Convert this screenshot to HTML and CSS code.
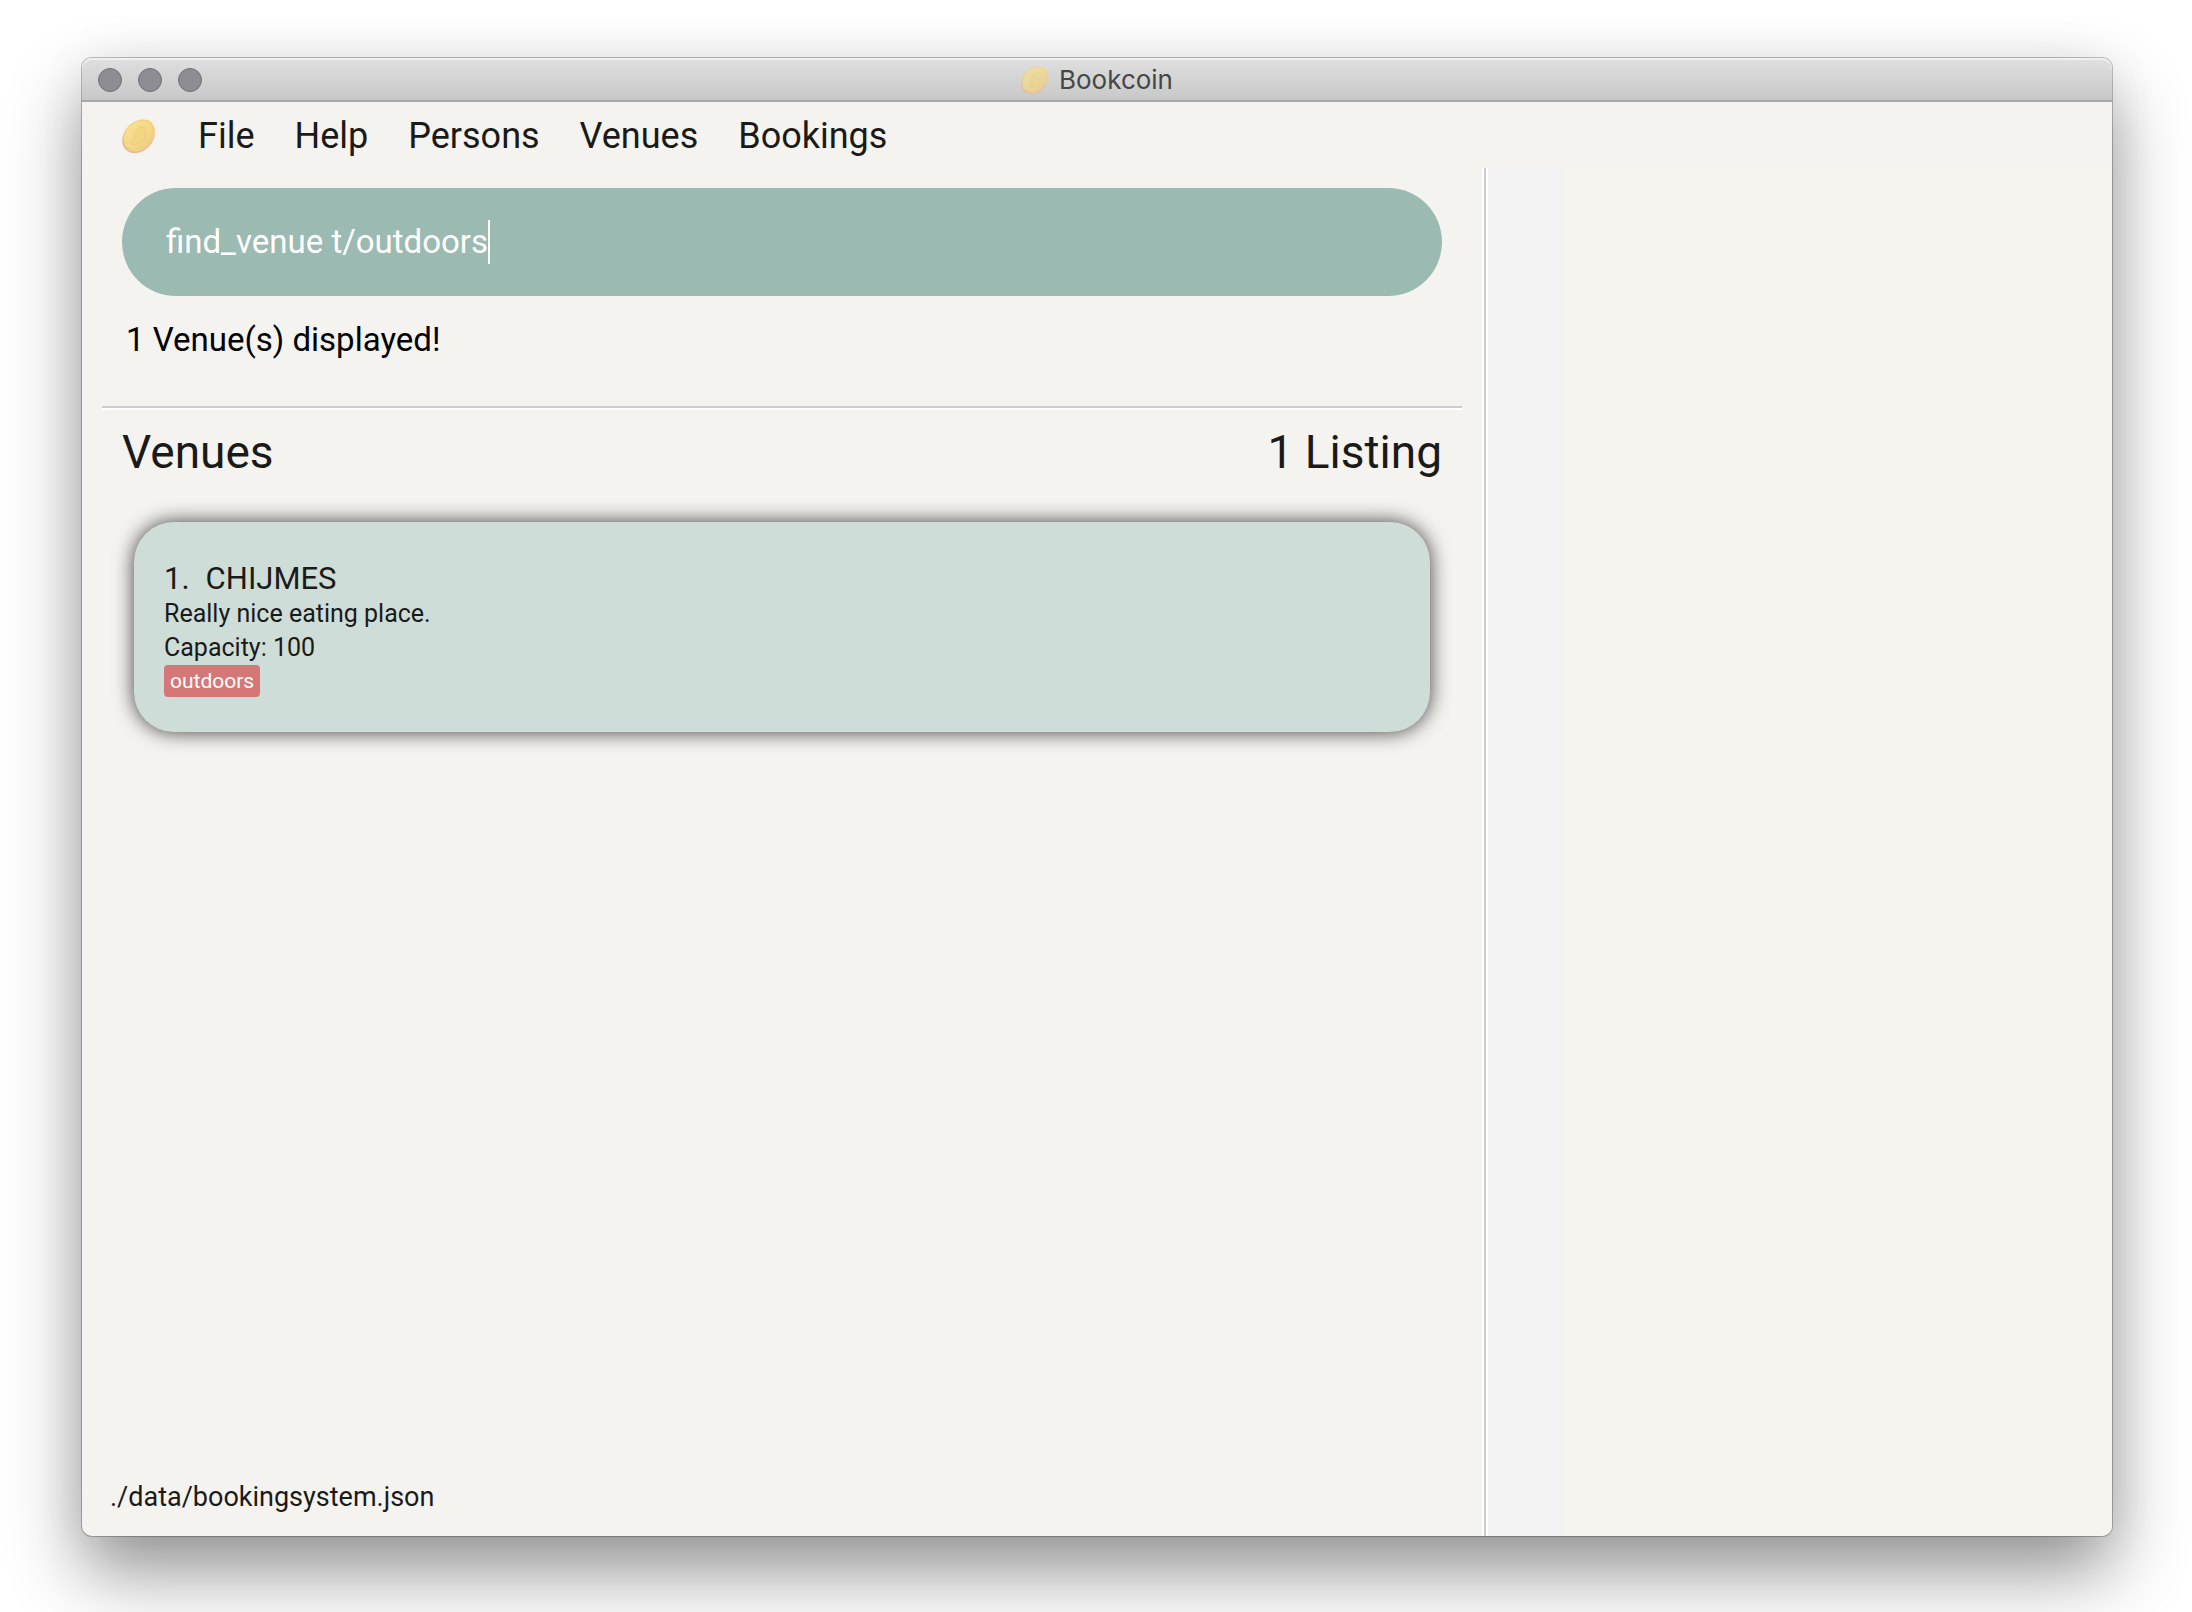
FILE: index.html
```html
<!DOCTYPE html>
<html lang="en">
<head>
<meta charset="utf-8">
<title>Bookcoin</title>
<link rel="stylesheet" href="styles.css">
</head>
<body>
<svg class="defs" width="0" height="0" aria-hidden="true">
  <defs>
    <linearGradient id="gold" x1="0" y1="0" x2="1" y2="1">
      <stop offset="0" stop-color="#f6e492"/>
      <stop offset="0.55" stop-color="#f4d886"/>
      <stop offset="1" stop-color="#f0c68a"/>
    </linearGradient>
  </defs>
  <symbol id="coin" viewBox="0 0 34 34">
    <ellipse cx="16.6" cy="17.6" rx="18.4" ry="14.4" transform="rotate(-46 16.6 17.6)" fill="#ebb894"/>
    <path d="M3 12C7 4 17-1 26 1c7 3 9 11 5 19-5 9-13 14-21 12C2 30-1 21 3 12z" fill="url(#gold)"/>
    <ellipse cx="16.4" cy="15.6" rx="16.4" ry="12.2" transform="rotate(-46 16.4 15.6)" fill="none" stroke="#eecd7e" stroke-width="0.8"/>
    <path d="M20 8c-3 0-5 2-6 4s0 3-1 4-2 1-1 3-3 3-3 5 3 2 5 1 6-1 8-4-1-3 1-6 1-7-3-7z" fill="#f3d680" stroke="#ebc97b" stroke-width="0.8"/>
  </symbol>
</svg>
<div class="window">
  <header class="titlebar">
    <div class="controls">
      <button type="button" aria-label="Close"></button>
      <button type="button" aria-label="Minimize"></button>
      <button type="button" aria-label="Zoom"></button>
    </div>
    <div class="title"><svg class="title-icon"><use href="#coin"/></svg><span>Bookcoin</span></div>
  </header>
  <nav class="menubar">
    <svg class="menu-icon"><use href="#coin"/></svg>
    <button type="button">File</button>
    <button type="button">Help</button>
    <button type="button">Persons</button>
    <button type="button">Venues</button>
    <button type="button">Bookings</button>
  </nav>
  <div class="panes">
    <main class="main">
      <label class="command">
        <input type="text" aria-label="Command" value="find_venue t/outdoors">
        <span class="caret"></span>
      </label>
      <output class="result">1 Venue(s) displayed!</output>
      <section class="listing">
        <div class="heading"><h1>Venues</h1><span>1 Listing</span></div>
        <ol class="cards">
          <li class="card">
            <h2><span>1.</span><span>CHIJMES</span></h2>
            <p>Really nice eating place.</p>
            <p>Capacity: 100</p>
            <span class="tag">outdoors</span>
          </li>
        </ol>
      </section>
      <footer class="status">./data/bookingsystem.json</footer>
    </main>
    <aside class="side"></aside>
  </div>
</div>
</body>
</html>
```
FILE: styles.css
```css
* { box-sizing: border-box; }

body {
  margin: 0;
  min-height: 100vh;
  padding: 58px 80px 76px 82px;
  display: flex;
  background: #fff;
  color: #1a1a18;
  font-family: Roboto, "Liberation Sans", sans-serif;
}

.defs { position: absolute; }

button {
  margin: 0;
  padding: 0;
  border: 0;
  background: none;
  color: inherit;
  font: inherit;
}

h1, h2, p, ol { margin: 0; padding: 0; font-weight: 400; list-style: none; }

.window {
  flex: 1;
  display: flex;
  flex-direction: column;
  border-radius: 10px;
  background: #f5f3ef;
  box-shadow:
    0 0 0 1px rgba(0, 0, 0, 0.24),
    0 36px 72px rgba(0, 0, 0, 0.42),
    0 0 50px rgba(0, 0, 0, 0.06);
}

.titlebar {
  height: 44px;
  padding: 2px 16px 0;
  display: grid;
  grid-template-columns: 1fr auto 1fr;
  align-items: center;
  border-radius: 10px 10px 0 0;
  border-bottom: 2px solid #a8a8a8;
  background: linear-gradient(#e0e0e0, #c8c8c8);
  box-shadow: inset 0 2px 0 #efefef;
}

.controls { display: flex; gap: 16px; }

.controls button {
  width: 24px;
  height: 24px;
  border: 1px solid #727176;
  border-radius: 50%;
  background: #8e8d93;
}

.title {
  display: flex;
  align-items: center;
  gap: 10px;
  color: #464646;
  font-family: Inter, "Liberation Sans", sans-serif;
  font-size: 26px;
  line-height: 34px;
}

.title-icon { width: 28px; height: 28px; opacity: 0.75; }

.menubar {
  height: 66px;
  padding: 2px 40px 0;
  display: flex;
  align-items: center;
  gap: 40px;
  font-size: 36px;
  line-height: 44px;
}

.menu-icon { width: 34px; height: 34px; margin-right: 2px; }

.panes {
  flex: 1;
  display: grid;
  grid-template-columns: 20fr 9fr;
}

.main {
  display: flex;
  flex-direction: column;
  padding: 20px 20px 0;
}

.command {
  height: 108px;
  margin: 0 20px;
  padding: 0 44px;
  display: flex;
  align-items: center;
  border-radius: 54px;
  background: #9bbab1;
}

.command input {
  field-sizing: content;
  padding: 0;
  border: 0;
  outline: 0;
  background: none;
  color: #fff;
  font: inherit;
  font-size: 33px;
  line-height: 44px;
}

.caret { width: 2px; height: 44px; background: #fff; }

.result {
  height: 112px;
  padding: 22px 24px;
  border-bottom: 2px solid #ccc;
  color: #000;
  font-size: 33px;
  line-height: 44px;
}

.listing {
  flex: 1;
  padding: 12px 20px;
  border-top: 2px solid #fff;
}

.heading {
  display: flex;
  justify-content: space-between;
  font-size: 46px;
  line-height: 60px;
}

.heading h1 { font-size: inherit; }

.cards { padding: 40px 12px; }

.card {
  height: 210px;
  padding: 38px 30px;
  border-radius: 40px;
  background: #cfddd8;
  box-shadow: 0 0 20px rgba(0, 0, 0, 0.75);
}

.card h2 {
  display: flex;
  gap: 16px;
  font-size: 31px;
  line-height: 37px;
}

.card p { font-size: 25px; line-height: 34px; }

.tag {
  display: inline-block;
  padding: 0 6px;
  border-radius: 4px;
  background: #d67777;
  color: #fff;
  font-size: 21px;
  line-height: 32px;
}

.status {
  padding: 20px 8px;
  font-size: 27px;
  line-height: 38px;
}

.side {
  border-left: 2px solid #fff;
  background: linear-gradient(90deg, #ccc 2px, #fff 2px 4px, #f4f3f1 4px 12px, #f3f3f4 12px 80px, #f5f4ef 80px);
  border-radius: 0 0 10px 0;
}
```
